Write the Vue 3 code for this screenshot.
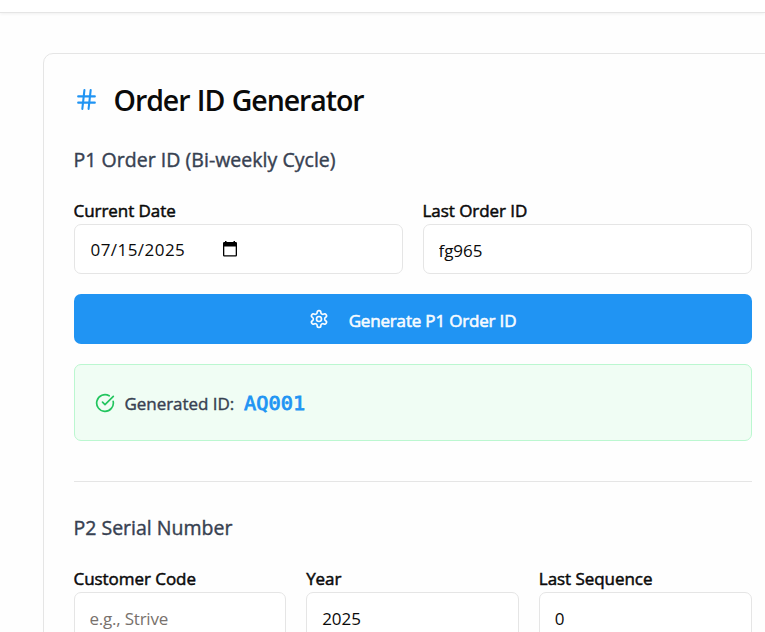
<script setup>
import { ref } from 'vue'

const lastOrderId = ref('fg965')
const generatedId = ref('AQ001')
const customerCode = ref('')
const year = ref('2025')
const lastSequence = ref('0')
</script>

<template>
  <div class="page">
    <header class="topbar"></header>
    <main class="content">
      <section class="card">
        <h1 class="title">
          <svg class="hash" viewBox="0 0 24 24"><path d="M4 9h16M4 15h16M10 3 8 21M16 3l-2 18" /></svg>
          <span>Order ID Generator</span>
        </h1>
        <h3 class="subtitle p1">P1 Order ID (Bi-weekly Cycle)</h3>
        <div class="grid two">
          <div class="field">
            <label>Current Date</label>
            <div class="input date">
              <span class="date-text">07/15/2025</span>
              <svg class="calendar" viewBox="0 0 16 16"><path fill-rule="evenodd" d="M3 0h1.500v1h7V0H13v1h.8q1.200 0 1.200 1.200v12.100q0 1.200-1.200 1.200H2.200Q1 15.500 1 14.300V2.200Q1 1 2.200 1H3ZM2.300 5.500v8.800h11.400V5.500Z" /></svg>
            </div>
          </div>
          <div class="field">
            <label>Last Order ID</label>
            <input v-model="lastOrderId" class="input order" />
          </div>
        </div>
        <button class="generate">
          <svg viewBox="0 0 24 24"><path d="M12.220 2h-.44a2 2 0 0 0-2 2v.18a2 2 0 0 1-1 1.730l-.43.25a2 2 0 0 1-2 0l-.15-.08a2 2 0 0 0-2.730.73l-.22.38a2 2 0 0 0 .73 2.730l.15.1a2 2 0 0 1 1 1.720v.51a2 2 0 0 1-1 1.740l-.15.09a2 2 0 0 0-.73 2.730l.22.38a2 2 0 0 0 2.730.73l.15-.08a2 2 0 0 1 2 0l.43.25a2 2 0 0 1 1 1.730V20a2 2 0 0 0 2 2h.44a2 2 0 0 0 2-2v-.18a2 2 0 0 1 1-1.730l.43-.25a2 2 0 0 1 2 0l.15.08a2 2 0 0 0 2.730-.73l.22-.39a2 2 0 0 0-.73-2.730l-.15-.08a2 2 0 0 1-1-1.740v-.5a2 2 0 0 1 1-1.740l.15-.09a2 2 0 0 0 .73-2.730l-.22-.38a2 2 0 0 0-2.730-.73l-.15.08a2 2 0 0 1-2 0l-.43-.25a2 2 0 0 1-1-1.730V4a2 2 0 0 0-2-2z" /><circle cx="12" cy="12" r="3" /></svg>
          <span>Generate P1 Order ID</span>
        </button>
        <div class="result">
          <svg viewBox="0 0 24 24"><path d="M21.801 10A10 10 0 1 1 17 3.335" /><path d="m9 11 3 3L22 4" /></svg>
          <span class="result-label">Generated ID:</span>
          <span class="result-id">{{ generatedId }}</span>
        </div>
        <div class="divider"></div>
        <h3 class="subtitle p2">P2 Serial Number</h3>
        <div class="grid three">
          <div class="field">
            <label>Customer Code</label>
            <input v-model="customerCode" class="input" placeholder="e.g., Strive" />
          </div>
          <div class="field">
            <label>Year</label>
            <input v-model="year" class="input" />
          </div>
          <div class="field">
            <label>Last Sequence</label>
            <input v-model="lastSequence" class="input" />
          </div>
        </div>
      </section>
    </main>
  </div>
</template>

<style>
body {
  overflow: hidden;
}
</style>

<style scoped>
* {
  box-sizing: border-box;
}
.page {
  height: 632px;
  overflow: hidden;
  background: #fefefe;
  color: #0a0a0a;
  font-family: "Open Sans", "Noto Sans", sans-serif;
}
svg {
  flex: none;
  fill: none;
  stroke: currentColor;
  stroke-width: 2;
  stroke-linecap: round;
  stroke-linejoin: round;
}
.topbar {
  height: 13px;
  background: #fff;
  border-bottom: 1px solid #e5e5e5;
  box-shadow: 0 1px 3px rgba(0, 0, 0, 0.06);
}
.content {
  padding: 40px 0 0 42.500px;
}
.card {
  width: 740px;
  height: 700px;
  padding: 30px;
  border: 1px solid #e5e5e5;
  border-radius: 10px;
}
.title {
  display: flex;
  align-items: center;
  height: 32px;
  margin: 0;
  font-size: 28.500px;
  font-weight: 600;
  line-height: 32px;
  white-space: nowrap;
  letter-spacing: -1.050px;
  word-spacing: 1px;
}
.hash {
  width: 25px;
  height: 25px;
  margin: -1px 15px 0 0;
  color: #2094f3;
}
.subtitle {
  height: 28px;
  margin: 30px 0 0;
  color: #374151;
  font-size: 19.500px;
  font-weight: 400;
  line-height: 28px;
  white-space: nowrap;
  -webkit-text-stroke: 0.4px currentColor;
}
.p1 {
  letter-spacing: 0.030px;
}
.grid {
  display: grid;
  gap: 20px;
}
.two {
  grid-template-columns: 1fr 1fr;
  margin-top: 27px;
}
.three {
  grid-template-columns: 1fr 1fr 1fr;
  margin-top: 27px;
}
.field {
  min-width: 0;
}
label {
  display: block;
  height: 23px;
  font-size: 17px;
  line-height: 20px;
  letter-spacing: -0.050px;
  white-space: nowrap;
  -webkit-text-stroke: 0.5px currentColor;
}
.input {
  display: flex;
  align-items: center;
  width: 100%;
  height: 50px;
  margin: 0;
  padding: 2px 15px 0;
  border: 1px solid #e5e5e5;
  border-radius: 7px;
  background: #fff;
  color: #0a0a0a;
  font-family: inherit;
  font-size: 17px;
  letter-spacing: -0.050px;
  outline: none;
}
.input::placeholder {
  color: #78716c;
  opacity: 1;
  letter-spacing: -0.220px;
}
.date {
  padding: 0 16px;
}
.date-text {
  width: 131px;
  letter-spacing: 0.450px;
}
.calendar {
  width: 16px;
  height: 16px;
  fill: #000;
  stroke: none;
}
.generate {
  display: flex;
  align-items: center;
  justify-content: center;
  width: 100%;
  height: 50px;
  margin: 20px 0 0;
  padding: 0;
  border: 0;
  border-radius: 7px;
  background: #2094f3;
  color: #f7fbff;
  font-family: inherit;
  font-size: 17px;
  font-weight: 400;
  white-space: nowrap;
}
.generate svg {
  width: 20px;
  height: 20px;
  margin-right: 20px;
}
.generate span {
  padding-top: 2px;
  letter-spacing: -0.180px;
  -webkit-text-stroke: 0.6px currentColor;
}
.result {
  display: flex;
  align-items: center;
  height: 77px;
  margin-top: 20px;
  padding: 0 20px;
  border: 1px solid #bbf7d0;
  border-radius: 7px;
  background: #f0fdf4;
  white-space: nowrap;
}
.result svg {
  width: 20px;
  height: 20px;
  margin-right: 10px;
  color: #22c55e;
}
.result-label {
  padding-top: 1px;
  color: #374151;
  font-size: 17px;
  letter-spacing: -0.050px;
  -webkit-text-stroke: 0.4px currentColor;
}
.result-id {
  margin-left: 10px;
  color: #2094f3;
  font-family: "DejaVu Sans Mono", monospace;
  font-size: 20.300px;
  -webkit-text-stroke: 0.800px currentColor;
}
.divider {
  height: 1px;
  margin-top: 40px;
  background: #e5e5e5;
}
.p2 {
  margin-top: 32px;
}
</style>
